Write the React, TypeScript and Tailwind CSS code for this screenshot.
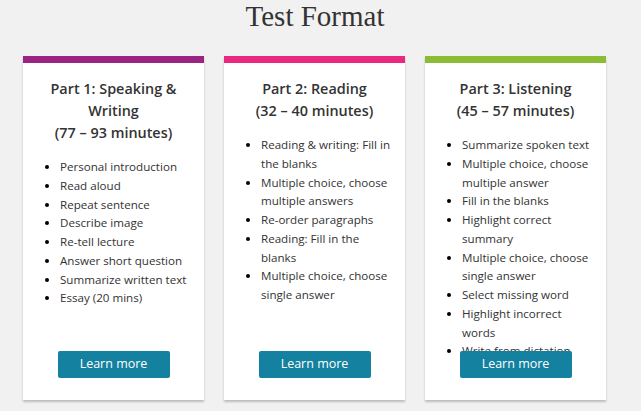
import React from 'react';

interface Part {
  title: string;
  subtitle: string;
  barColor: string;
  items: string[];
}

const parts: Part[] = [
  {
    title: 'Part 1: Speaking & Writing',
    subtitle: '(77 – 93 minutes)',
    barColor: 'bg-[#9b2482]',
    items: [
      'Personal introduction',
      'Read aloud',
      'Repeat sentence',
      'Describe image',
      'Re-tell lecture',
      'Answer short question',
      'Summarize written text',
      'Essay (20 mins)',
    ],
  },
  {
    title: 'Part 2: Reading',
    subtitle: '(32 – 40 minutes)',
    barColor: 'bg-[#e8297f]',
    items: [
      'Reading & writing: Fill in the blanks',
      'Multiple choice, choose multiple answers',
      'Re-order paragraphs',
      'Reading: Fill in the blanks',
      'Multiple choice, choose single answer',
    ],
  },
  {
    title: 'Part 3: Listening',
    subtitle: '(45 – 57 minutes)',
    barColor: 'bg-[#8abd35]',
    items: [
      'Summarize spoken text',
      'Multiple choice, choose multiple answer',
      'Fill in the blanks',
      'Highlight correct summary',
      'Multiple choice, choose single answer',
      'Select missing word',
      'Highlight incorrect words',
      'Write from dictation',
    ],
  },
];

const PartCard: React.FC<{ part: Part }> = ({ part }) => {
  return (
    <div className="relative w-[181px] h-[344px] bg-white overflow-hidden shadow-[0_2px_2px_rgba(0,0,0,0.22)]">
      <div className={`h-[7px] ${part.barColor}`} />
      <div className="px-[15px] pt-[15px]">
        <h3 className="text-center text-[14.4px] leading-[22px] font-semibold text-[#333]">
          {part.title}
          <br />
          {part.subtitle}
        </h3>
        <ul className="mt-[14px] pl-[22px] list-disc text-[11.6px] leading-[18.75px] text-[#333] marker:text-black">
          {part.items.map((item) => (
            <li key={item}>{item}</li>
          ))}
        </ul>
      </div>
      <div className="absolute left-0 right-0 bottom-[22px] flex justify-center">
        <button className="w-[112px] h-[27px] rounded-[2px] bg-[#13819f] text-white text-[12.5px] font-medium">
          Learn more
        </button>
      </div>
    </div>
  );
};

const App: React.FC = () => {
  return (
    <div
      className="w-[641px] h-[411px] bg-[#f1f1f1] overflow-hidden"
      style={{ fontFamily: '"Open Sans", "Liberation Sans", sans-serif' }}
    >
      <h1
        className="text-center text-[29px] leading-[32px] text-[#333] ml-[-11px]"
        style={{ fontFamily: '"Liberation Serif", serif' }}
      >
        Test Format
      </h1>
      <div className="mt-[24px] pl-[23px] flex gap-[20px]">
        {parts.map((p) => (
          <PartCard key={p.title} part={p} />
        ))}
      </div>
    </div>
  );
};

export default App;
